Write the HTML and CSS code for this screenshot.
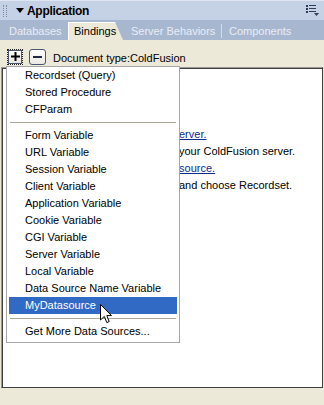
FILE: index.html
```html
<!DOCTYPE html>
<html lang="en">
<head>
  <meta charset="UTF-8" />
  <title>Application - Bindings</title>
  <link rel="stylesheet" href="styles.css">
</head>
<body>
  <div class="window">
    <div class="titlebar">
      <span class="grip"></span>
      <svg class="collapse" viewBox="0 0 8 5" width="8" height="5"><polygon points="0,0 8,0 4,5" fill="#000"/></svg>
      <span class="title">Application</span>
      <svg class="options" viewBox="0 0 13 11" width="13" height="11">
        <g fill="#2f3d58">
          <rect x="0" y="0" width="2" height="2"/><rect x="3" y="0" width="7" height="1"/>
          <rect x="0" y="3" width="2" height="2"/><rect x="3" y="3" width="7" height="1"/>
          <rect x="0" y="6" width="2" height="2"/><rect x="3" y="6" width="7" height="1"/>
          <polygon points="8,8 13,8 10.5,11"/>
        </g>
      </svg>
    </div>

    <div class="tabs">
      <span class="tab tab-db">Databases</span>
      <span class="tab active">Bindings</span>
      <span class="tab tab-sb">Server Behaviors</span>
      <span class="tab-sep"></span>
      <span class="tab tab-comp">Components</span>
    </div>

    <div class="toolbar">
      <button class="tool tool-plus" type="button">
        <svg viewBox="0 0 9 9" width="9" height="9"><path d="M3.5 0h2v3.5H9v2H5.5V9h-2V5.5H0v-2h3.5z" fill="#000"/></svg>
      </button>
      <button class="tool tool-minus" type="button">
        <svg viewBox="0 0 9 2" width="9" height="2"><rect width="9" height="2" fill="#1d2a48"/></svg>
      </button>
      <span class="doctype">Document type:ColdFusion</span>
    </div>

    <div class="panel">
      <div class="msg">
        <div><a href="#">erver.</a></div>
        <div>your ColdFusion server.</div>
        <div><a class="pull" href="#">&nbsp;source.</a></div>
        <div>and choose Recordset.</div>
      </div>
    </div>

    <ul class="menu">
      <li>Recordset (Query)</li>
      <li>Stored Procedure</li>
      <li>CFParam</li>
      <li class="sep"><span></span></li>
      <li>Form Variable</li>
      <li>URL Variable</li>
      <li>Session Variable</li>
      <li>Client Variable</li>
      <li>Application Variable</li>
      <li>Cookie Variable</li>
      <li>CGI Variable</li>
      <li>Server Variable</li>
      <li>Local Variable</li>
      <li>Data Source Name Variable</li>
      <li class="selected">MyDatasource</li>
      <li class="sep"><span></span></li>
      <li>Get More Data Sources...</li>
    </ul>

    <svg class="cursor" viewBox="0 0 12 20" width="12" height="20">
      <path d="M0.5 0.5V16L4.3 12.4L6.8 18.6L9.2 17.6L6.8 11.6H11.5Z" fill="#fff" stroke="#000" stroke-width="1" stroke-linejoin="miter"/>
    </svg>
  </div>
</body>
</html>
```

FILE: styles.css
```css
* {
  margin: 0;
  padding: 0;
  box-sizing: border-box;
}
body {
  font-family: 'Liberation Sans', Arial, sans-serif;
  font-size: 11px;
  color: #000;
  background: #ece9d8;
  width: 324px;
  height: 405px;
  overflow: hidden;
}
.window {
  position: relative;
  height: 405px;
  display: flex;
  flex-direction: column;
}

/* title bar */
.titlebar {
  height: 20px;
  display: flex;
  align-items: center;
  padding-left: 3px;
  background: #c5d1e4;
  border-top: 1px solid #dfe6f1;
}
.grip {
  width: 4px;
  height: 12px;
  border-left: 1px dotted #7f8ca5;
  border-right: 1px dotted #7f8ca5;
}
.collapse {
  margin-left: 9px;
}
.title {
  margin-left: 3px;
  font-weight: bold;
  font-size: 12px;
  letter-spacing: -0.3px;
}
.options {
  margin-left: auto;
  margin-right: 5px;
}

/* tabs */
.tabs {
  height: 20px;
  display: flex;
  align-items: flex-end;
  background: #a8b7d0;
}
.tab {
  height: 18px;
  line-height: 18px;
  color: #e8edf5;
  white-space: nowrap;
}
.tab-db {
  width: 68px;
  padding-left: 9px;
}
.tab.active {
  width: 55px;
  padding-left: 6px;
  color: #000;
  background: #ece9d8;
  box-shadow: inset 1px 1px 0 #fff;
  clip-path: polygon(0 0, 47px 0, 100% 100%, 0 100%);
}
.tab-sb {
  width: 98px;
  padding-left: 8px;
}
.tab-sep {
  width: 1px;
  height: 14px;
  margin-bottom: 2px;
  background: #d3dbe8;
}
.tab-comp {
  padding-left: 7px;
}

/* toolbar */
.toolbar {
  height: 27px;
  display: flex;
  align-items: center;
  padding: 6px 0 0 7px;
}
.tool {
  width: 16px;
  height: 16px;
  display: flex;
  align-items: center;
  justify-content: center;
  cursor: pointer;
}
.tool-plus {
  border: 1px dotted #222;
  background: linear-gradient(#ffffff, #e6e4da);
  box-shadow: inset 0 0 0 1px #4b5672;
}
.tool-minus {
  width: 17px;
  margin-left: 6px;
  border: 1px solid #4a5670;
  border-radius: 3px;
  background: linear-gradient(#ffffff, #eae8e0);
}
.doctype {
  margin-left: 7px;
  margin-top: 3px;
}

/* white panel */
.panel {
  height: 321px;
  margin: 0 1px;
  background: #fff;
  border: 1px solid #404040;
  border-top-color: #9a9a9a;
  border-left-color: #9a9a9a;
  box-shadow: inset 1px 1px 0 #404040;
}
.msg {
  padding: 58px 0 0 177px;
  line-height: 17px;
  white-space: nowrap;
}
.msg a {
  color: #0c2c8e;
}
.msg .pull {
  margin-left: -3px;
}

/* dropdown menu */
.menu {
  position: absolute;
  left: 6px;
  top: 66px;
  width: 174px;
  padding: 0 1px 2px;
  list-style: none;
  background: #fff;
  border: 1px solid #a7a6aa;
}
.menu li {
  height: 17px;
  line-height: 17px;
  margin: 0 1px;
  padding-left: 16px;
  white-space: nowrap;
}
.menu li.selected {
  background: #316ac5;
  color: #fff;
}
.menu li.sep {
  height: 9px;
  padding: 4px 1px 0;
}
.menu li.sep span {
  display: block;
  height: 1px;
  background: #aca899;
}
.cursor {
  position: absolute;
  left: 100px;
  top: 304px;
}
```
